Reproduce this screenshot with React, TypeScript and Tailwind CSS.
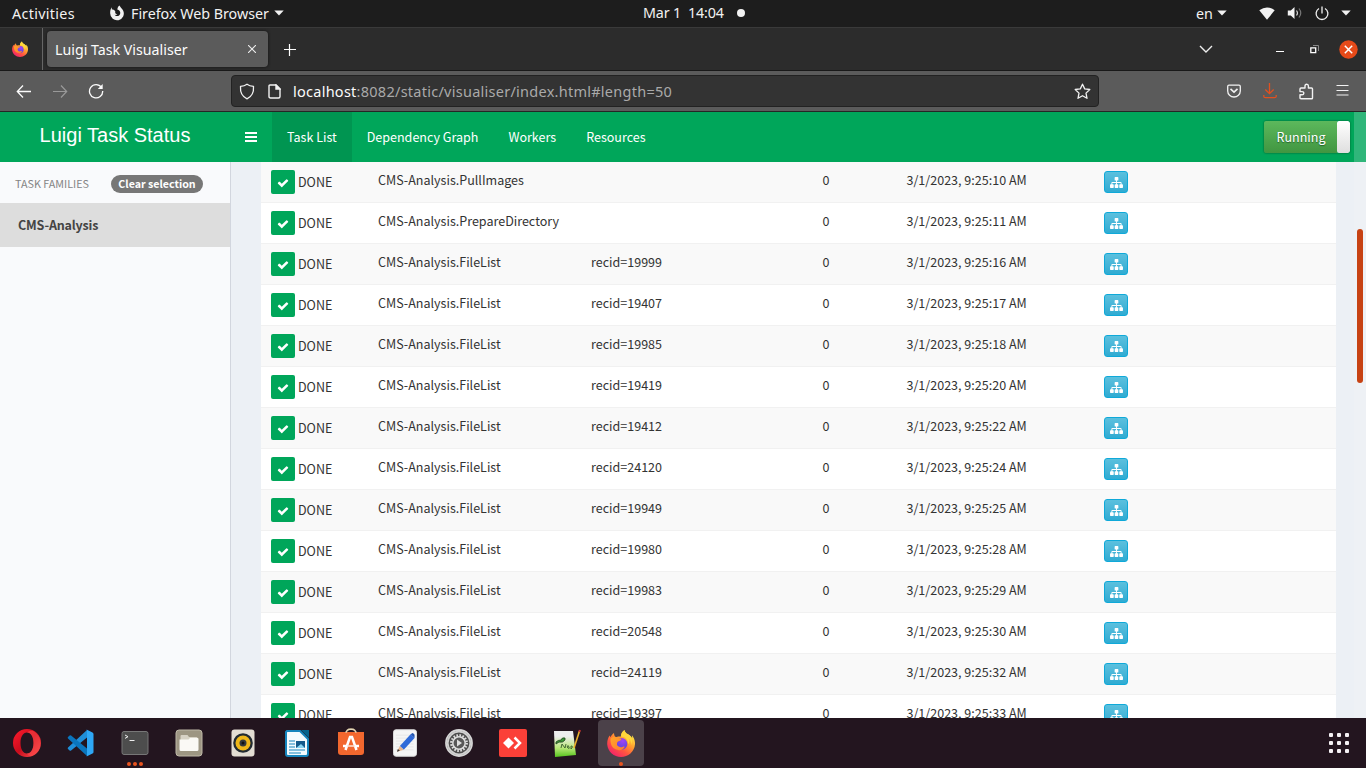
import React from "react";

const rows: [string, string, string][] = [
  ["PullImages", "", "10"],
  ["PrepareDirectory", "", "11"],
  ["FileList", "19999", "16"],
  ["FileList", "19407", "17"],
  ["FileList", "19985", "18"],
  ["FileList", "19419", "20"],
  ["FileList", "19412", "22"],
  ["FileList", "24120", "24"],
  ["FileList", "19949", "25"],
  ["FileList", "19980", "28"],
  ["FileList", "19983", "29"],
  ["FileList", "20548", "30"],
  ["FileList", "24119", "32"],
  ["FileList", "19397", "33"],
];

function Check() {
  return (
    <svg width="12" height="12" viewBox="0 0 1792 1792" fill="#fff">
      <path d="M1671 566q0 40-28 68l-724 724-136 136q-28 28-68 28t-68-28l-136-136-362-362q-28-28-28-68t28-68l136-136q28-28 68-28t68 28l294 295 656-657q28-28 68-28t68 28l136 136q28 28 28 68z" />
    </svg>
  );
}

function Sitemap() {
  return (
    <svg width="13" height="12" viewBox="0 0 1792 1664" fill="#fff">
      <path d="M1792 1248v320q0 40-28 68t-68 28h-320q-40 0-68-28t-28-68v-320q0-40 28-68t68-28h96v-192h-512v192h96q40 0 68 28t28 68v320q0 40-28 68t-68 28h-320q-40 0-68-28t-28-68v-320q0-40 28-68t68-28h96v-192h-512v192h96q40 0 68 28t28 68v320q0 40-28 68t-68 28h-320q-40 0-68-28t-28-68v-320q0-40 28-68t68-28h96v-192q0-52 38-90t90-38h512v-192h-96q-40 0-68-28t-28-68v-320q0-40 28-68t68-28h320q40 0 68 28t28 68v320q0 40-28 68t-68 28h-96v192h512q52 0 90 38t38 90v192h96q40 0 68 28t28 68z" />
    </svg>
  );
}

function Firefox({ size, id }: { size: number; id: string }) {
  return (
    <svg width={size} height={size} viewBox="0 0 32 32">
      <defs>
        <linearGradient id={id + "a"} x1="0.85" y1="0.1" x2="0.2" y2="0.95">
          <stop offset="0" stopColor="#fff04a" />
          <stop offset="0.35" stopColor="#ffa12e" />
          <stop offset="0.65" stopColor="#ff5540" />
          <stop offset="1" stopColor="#f2216b" />
        </linearGradient>
        <radialGradient id={id + "b"} cx="0.6" cy="0.25" r="0.8">
          <stop offset="0" stopColor="#a044f5" />
          <stop offset="1" stopColor="#4f46d8" />
        </radialGradient>
        <linearGradient id={id + "c"} x1="0" y1="0" x2="1" y2="1">
          <stop offset="0" stopColor="#ffa628" />
          <stop offset="1" stopColor="#ff7a30" />
        </linearGradient>
      </defs>
      <path fill={"url(#" + id + "a)"} d="M20 1c-3 2-4 4.500-4.200 7.500C13 8.300 11.500 8.500 10 9.500 8.500 8.500 8 6 8 4.500 5.800 6 4.600 8 3.800 9.500L3 7.500C1 10.500 0 14 .300 18 1 26 8 32 16 32s15.500-6 16-14.500c.200-4-1-7.500-3.500-10.500l.300 3.500C27.800 8.500 26 7 24 6 21.500 4.500 20 3 20 1Z" />
      <circle cx="16.500" cy="17" r="6.800" fill={"url(#" + id + "b)"} />
      <path fill={"url(#" + id + "c)"} d="M4 11c3-3 6-2.500 8.500-.5 2 .200 3 0 4 .700 0 1.800-2 2.300-4 3-1.500 1.500-1.500 4-.2 5.300 1.700 1.500 4 1.600 6 .7 1.500-.5 2.200 0 1.700.7-2 3.500-5.500 4-8 2.800C7.500 23 3.500 19 4 11Z" />
      <path fill="#ffd83b" d="M20 1c-3 2-4 4.500-4 7.500 5 0 8.500 4 8 9 2-2 2-5 1-7 2 2 3 5 2.500 8C31 11 26 7 24 6 21.500 4.500 20 3 20 1Z" />
    </svg>
  );
}

function Caret() {
  return <svg width="10" height="6" viewBox="0 0 10 6" fill="#f2f2f2"><path d="M.3.500h9.400L5 5.500Z" /></svg>;
}

function TopBar() {
  return (
    <div className="flex h-[28px] border-b border-[#3a3a3a] bg-[#1d1d1d] pb-[1px] text-[14.300px] leading-[27px] text-[#f2f2f2]">
      <div className="w-[109px] shrink-0 whitespace-nowrap pl-[12px] tracking-[0.330px]">Activities</div>
      <div className="flex w-[534px] items-center">
        <svg className="mr-[6px]" width="16" height="17" viewBox="0 0 16 17" fill="none">
          <path d="M1.200 8.500a6.800 6.800 0 1 0 12.900-3C13.200 3.800 11.700 3 10.500.500 9 1.500 8.500 3 8.300 4.500 10.800 5 11.800 7 11 9.200c-.8 2-4 2.800-5.400.6 1 .3 2 .1 2.800-.7C6.800 9 5.800 8 6.300 6.300 5.500 5 4 4.300 2.800 4.500V2.300C1.500 4 1 6.200 1.200 8.500Z" fill="#f2f2f2" />
        </svg>
        <span className="whitespace-nowrap tracking-[-0.020px]">Firefox Web Browser</span>
        <span className="ml-[5px]"><Caret /></span>
      </div>
      <div className="flex w-[553px] items-center leading-[26px]">
        <span className="whitespace-pre tracking-[-0.170px]">Mar 1  14:04</span>
        <span className="ml-[13px] size-[8px] rounded-full bg-[#f2f2f2]" />
      </div>
      <div className="flex w-[63px] items-center gap-[4px]"><span>en</span><Caret /></div>
      <div className="flex items-center">
        <svg width="16" height="13" viewBox="0 0 16 13" fill="#f2f2f2"><path d="M.3 3.300Q8-2.500 15.700 3.300L8 12.800Z" /></svg>
        <svg className="ml-[12px]" width="16" height="14" viewBox="0 0 16 14" fill="none">
          <path d="M.8 4.500h3L7.500 1v12L3.800 9.500h-3Z" fill="#f2f2f2" />
          <path d="M9.500 4.500q2 2.500 0 5" stroke="#d0d0d0" strokeWidth="1.200" /><path d="M12 2.500q3.500 4.500 0 9" stroke="#777" strokeWidth="1.200" />
        </svg>
        <svg className="ml-[12px]" width="14" height="15" viewBox="0 0 14 15" fill="none" stroke="#f2f2f2" strokeWidth="1.300">
          <path d="M7 .5v7M4 2.500a5.900 5.900 0 1 0 6 0" />
        </svg>
        <span className="ml-[12px]"><Caret /></span>
      </div>
    </div>
  );
}

function TabBar() {
  return (
    <div className="flex h-[43px] border-b border-[#191919] bg-[#2c2c2c]">
      <div className="flex w-[43px] items-center justify-center border-r border-[#666] pr-[3px]"><Firefox size={16} id="f" /></div>
      <div className="ml-[4px] mt-[3px] flex h-[36px] w-[221px] items-center rounded-[4px] bg-[#5b5b5b] pl-[8px] text-[14.200px] text-[#fbfbfb] shadow-[0_0_3px_#111]">
        <span className="w-[193px] whitespace-nowrap pt-[2px] tracking-[0.010px]">Luigi Task Visualiser</span>
        <svg width="8" height="8" viewBox="0 0 8 8" stroke="#eee" strokeWidth="1.100"><path d="m0 0 8 8M8 0 0 8" /></svg>
      </div>
      <svg className="ml-[16px] mt-[16px]" width="12" height="12" viewBox="0 0 12 12" stroke="#fff" strokeWidth="1.200"><path d="M5.500 0v12M0 5.500h12" /></svg>
      <div className="grow" />
      <svg className="mr-[63px] mt-[17px]" width="14" height="9" viewBox="0 0 14 9" fill="none" stroke="#eee" strokeWidth="1.400"><path d="m1 1 6 6 6-6" /></svg>
      <div className="mr-[26px] mt-[23px] h-px w-[8px] bg-white" />
      <svg className="mr-[20px] mt-[17px]" width="9" height="9" viewBox="0 0 9 9" fill="none"><path d="M3 .5h5.500V6" stroke="#888" /><path d="M.8 2.800h4.900v4.900H.8Z" stroke="#fff" strokeWidth="1.300" /></svg>
      <svg className="mr-[8px] mt-[12px]" width="19" height="19" viewBox="0 0 19 19"><circle cx="9.500" cy="9.500" r="9.200" fill="#e64a19" /><path d="m5.800 5.800 7.400 7.400m0-7.400-7.400 7.400" stroke="#fff" strokeWidth="1.500" /></svg>
    </div>
  );
}

function ToolBar() {
  return (
    <div className="flex h-[41px] items-center border-b border-[#252525] bg-[#5b5b5b]">
      <svg className="ml-[16px]" width="16" height="14" viewBox="0 0 16 14" fill="none" stroke="#fbfbfb" strokeWidth="1.300"><path d="M7 1.500 1.300 7.500 7 13.500M1.300 7.500H15" /></svg>
      <svg className="ml-[21px]" width="15" height="14" viewBox="0 0 15 14" fill="none" stroke="#999" strokeWidth="1.200"><path d="m8 1.500 5.700 6-5.700 6M13.700 7.500H0" /></svg>
      <svg className="ml-[20px]" width="16" height="16" viewBox="0 0 16 16" fill="none" stroke="#fbfbfb" strokeWidth="1.300"><path d="M13.500 4.500A6.600 6.600 0 1 0 14.700 8" /><path d="M14.700 1v5H9.800Z" fill="#fbfbfb" stroke="none" /></svg>
      <div className="ml-[127px] flex h-[32px] w-[868px] items-center rounded-[4px] border border-[#222] bg-[#333]">
        <svg className="ml-[7px]" width="16" height="17" viewBox="0 0 16 17" fill="none" stroke="#f2f2f2" strokeWidth="1.300"><path d="M8 1.200c2 1.500 4 2 6.500 2.200.4 5.600-1.200 10.100-6.500 12.400C2.700 13.500 1.100 9 1.500 3.400 4 3.200 6 2.700 8 1.200Z" strokeLinejoin="round" /></svg>
        <svg className="ml-[13px]" width="13" height="15" viewBox="0 0 13 15" fill="none" stroke="#f2f2f2" strokeWidth="1.400"><path d="M2 1h6l4 4v7.500q0 1.500-1.500 1.500h-8Q1 14 1 12.500V2q0-1 1-1Z" /><path d="M8 1v4h4Z" fill="#f2f2f2" /></svg>
        <span className="ml-[12px] w-[781px] whitespace-nowrap pt-[2px] text-[14.500px] tracking-[0.260px] text-[#aaa]"><span className="text-[#fbfbfb]">localhost</span>:8082/static/visualiser/index.html#length=50</span>
        <svg width="17" height="17" viewBox="0 0 17 17" fill="none" stroke="#f2f2f2" strokeWidth="1.300" strokeLinejoin="round"><path d="m8.500 1.200 2.200 4.700 5.100.6-3.800 3.600 1 5.200-4.500-2.600L4 15.300l1-5.200-3.800-3.600 5.100-.6Z" /></svg>
      </div>
      <svg className="ml-[128px]" width="14" height="14" viewBox="0 0 14 14" fill="none" stroke="#f2f2f2" strokeWidth="1.300"><path d="M2 1.200h10q1.300 0 1.300 1.300V7a6.300 6 0 0 1-12.600 0V2.500Q.7 1.200 2 1.200Z" /><path d="m3.500 4.800 3.500 3.300 3.500-3.300" strokeWidth="1.600" /></svg>
      <svg className="ml-[22px]" width="14" height="16" viewBox="0 0 14 16" fill="none" stroke="#e2501f" strokeWidth="1.300"><path d="M6.500 0v10.500M2.300 6.500l4.200 4.200 4.200-4.200M.8 12v1.200q0 1.500 1.500 1.500h9.400q1.500 0 1.500-1.500V12" /></svg>
      <svg className="ml-[22px]" width="15" height="17" viewBox="0 0 15 17" fill="none" stroke="#f2f2f2" strokeWidth="1.400" strokeLinejoin="round"><path d="M2 5h4V3q0-1.800 1.700-1.800T9.400 3v2h3.100q1 0 1 1v9q0 .8-.8.800H2q-1 0-1-1v-3h2q1.800 0 1.800-1.600T3 8.600H1V6q0-1 1-1Z" /></svg>
      <svg className="mb-[1px] ml-[22px]" width="13" height="11" viewBox="0 0 13 11" stroke="#f2f2f2" strokeWidth="1.200"><path d="M.5.500h12M.5 5.500h12M.5 10h12" /></svg>
    </div>
  );
}

function PageHeader() {
  return (
    <div className="flex h-[50px] bg-[#00a65a] text-[12.540px] leading-[50px] text-white">
      <div className="w-[230px] text-center font-['Liberation_Sans',sans-serif] text-[20px] leading-[46px]">Luigi Task Status</div>
      <div className="flex w-[42px] items-center justify-center"><svg width="12" height="10" viewBox="0 0 12 10" fill="#fff"><path d="M0 0h12v2H0zM0 4h12v2H0zM0 8h12v2H0z" /></svg></div>
      <div className="bg-[#009551] px-[15px]">Task List</div>
      <div className="px-[15px]">Dependency Graph</div>
      <div className="px-[15px]">Workers</div>
      <div className="px-[15px]">Resources</div>
      <div className="grow" />
      <div className="mr-[4px] mt-[9px] flex h-[32px] w-[86px] overflow-hidden rounded-[2px] shadow-[0_0_2px_#004d24]">
        <div className="w-[73px] bg-gradient-to-b from-[#5cb85c] to-[#419641] pl-px text-center leading-[32px] [text-shadow:0_1px_1px_#27652a]">Running</div>
        <div className="w-[13px] rounded-[2px] bg-gradient-to-b from-white to-[#dfdfdf]" />
      </div>
      <div className="w-[12px] bg-[#30b67a]" />
    </div>
  );
}

const tile = "flex h-[50px] w-[54px] items-center justify-center";

function Dock() {
  return (
    <div className="flex h-[50px] items-center bg-[#23151f]">
      <div className={tile}>
        <svg width="28" height="28" viewBox="0 0 28 28"><defs><linearGradient id="op" x1="0" y1="0" x2="1" y2="1"><stop stopColor="#ff1b2d" /><stop offset=".5" stopColor="#c90d1d" /><stop offset="1" stopColor="#ff5252" /></linearGradient></defs>
          <path fillRule="evenodd" fill="url(#op)" d="M14 0a14 14 0 1 0 0 28 14 14 0 0 0 0-28Zm0 3.500c4 0 6.500 4.500 6.500 10.500S18 24.500 14 24.500 7.500 20 7.500 14 10 3.500 14 3.500Z" /><path fill="#ff4b4b" d="M14 24.500c4 0 6.500-4.500 6.500-10.500S18 3.500 14 3.500c2-2 4-2 6-1.700A14 14 0 0 1 19 27c-2 .500-4-.500-5-2.500Z" opacity=".55" /></svg>
      </div>
      <div className={tile}>
        <svg width="28" height="28" viewBox="0 0 28 28"><path d="M20 1 1 18.500q-.7.8 0 1.500l1.600 1.500q.8.600 1.500 0L20 8.500Z" fill="#1f8ed8" /><path d="M20 27 1 9.500q-.7-.8 0-1.500l1.600-1.500q.8-.6 1.500 0L20 19.500Z" fill="#0a75bd" /><path d="m19.500.500 6 3q1 .5 1 1.500v18q0 1-1 1.500l-6 3q.5-.5.500-1.500V2q0-1-.5-1.500Z" fill="#2ea7f5" /></svg>
      </div>
      <div className={tile + " relative"}>
        <svg width="28" height="24" viewBox="0 0 28 24"><rect x="1" y=".5" width="26" height="23" rx="2" fill="#4d4d4d" stroke="#777" /><path d="m4 4 3 1.700-3 1.700M8.500 9.500h5" fill="none" stroke="#eee" /></svg>
        <div className="absolute bottom-[2px] flex gap-[2px]"><i className="size-[4px] rounded-full bg-[#e95420]" /><i className="size-[4px] rounded-full bg-[#e95420]" /><i className="size-[4px] rounded-full bg-[#e95420]" /></div>
      </div>
      <div className={tile}>
        <svg width="28" height="28" viewBox="-.5 -.5 28 28"><rect x=".5" y=".5" width="26" height="26" rx="3" fill="#9d9683" stroke="#beb8a7" /><path d="M5 6.500q0-1 1-1h6l1.500 2H21q1 0 1 1V12H5Z" fill="#d7d2c5" /><path d="M4 10h9l1.500-1.500H22q1 0 1 1V20q0 1.500-1.500 1.500h-16Q4 21.500 4 20Z" fill="#faf9f5" /></svg>
      </div>
      <div className={tile}>
        <svg width="24" height="28" viewBox="0 0 24 28"><rect x=".5" y=".5" width="23" height="27" rx="3" fill="#e3ddd3" /><circle cx="12" cy="14" r="9.800" fill="#222b31" /><circle cx="12" cy="14" r="7.500" fill="#efb719" /><circle cx="12" cy="14" r="3.500" fill="#343a3c" /><circle cx="12" cy="14" r="1.500" fill="#111" /></svg>
      </div>
      <div className={tile}>
        <svg width="24" height="27" viewBox="0 0 24 27"><path d="M2 1h13l8 8v15q0 2-2 2H3q-2 0-2-2V2Z" fill="#f4fbfe" stroke="#1685bd" strokeWidth="2" /><path d="M16 0h8v8Z" fill="#05638c" /><path d="M4 11h6M4 14h6M4 17h6M4 20h16M4 23h12" stroke="#1685bd" strokeWidth="1.200" /><path d="M11 11h9v7h-9Z" fill="#155a8b" /><path d="m11 18 5-4 4 4Z" fill="#8bd6f3" /></svg>
      </div>
      <div className={tile}>
        <svg className="mb-[2px]" width="28" height="28" viewBox="0 0 28 28"><path d="M9 6Q9 1 14 1t5 5" fill="none" stroke="#d8c7a0" strokeWidth="1.500" /><path d="M1 4h26v20q0 3-3 3H4q-3 0-3-3Z" fill="#f2672e" /><path d="M9 5q0-3.500 5-3.500T19 5" fill="none" stroke="#e7dcc0" /><path d="M8.500 22 13 9h2l4.500 13M6 18h5m6 0h5" fill="none" stroke="#fff" strokeWidth="2.500" /><path d="M10 18h8" stroke="#ffe3d5" strokeWidth="1.500" /></svg>
      </div>
      <div className={tile}>
        <svg width="24" height="28" viewBox="0 0 24.500 28"><rect x=".5" y=".5" width="23.500" height="27" rx="2.500" fill="#f5f5f5" stroke="#ddd" /><path d="M3 6h18M3 9h18M3 12h18M3 15h18M3 18h18M3 21h18" stroke="#e0e0e0" strokeWidth=".7" /><path d="m7 17 11-12 4 4-11 12Z" fill="#2f6ad8" /><path d="m18 5 1.500-1q1-.5 2.500 1.500v3.500Z" fill="#2355ae" /><path d="m7 17 4 4-7 2Z" fill="#e6b58e" /><path d="m5 20-1 3 3-1Z" fill="#333" /></svg>
      </div>
      <div className={tile}>
        <svg width="28" height="28" viewBox="0 0 28 28"><circle cx="14" cy="14" r="13" fill="#4d4d4d" stroke="#d5d5d5" strokeWidth="1.800" /><circle cx="14" cy="14" r="11.300" fill="none" stroke="#d0d0d0" strokeWidth="1.800" /><circle cx="14" cy="14" r="7.600" fill="none" stroke="#ddd" strokeWidth="2.600" strokeDasharray="1.600 1.400" /><circle cx="14" cy="14" r="6.200" fill="#585858" stroke="#ddd" strokeWidth="1.500" /><path d="m12 10.500 5 3.500-5 3.500Z" fill="#ddd" /></svg>
      </div>
      <div className={tile}>
        <svg width="28" height="28" viewBox="0 0 28 28"><rect width="28" height="28" rx="2" fill="#fb4038" /><path d="m4 14 5.500-5.500L15 14l-5.500 5.500Z" fill="#fff" /><path d="m15.500 8.500 5.500 5.500-5.500 5.500" fill="none" stroke="#fff" strokeWidth="2.500" /></svg>
      </div>
      <div className={tile}>
        <svg width="28" height="28" viewBox="0 0 28 28"><defs><linearGradient id="npp" x1="0" y1="0" x2="0" y2="1"><stop offset=".2" stopColor="#eee" /><stop offset=".65" stopColor="#b9e878" /><stop offset="1" stopColor="#56c41d" /></linearGradient></defs><path d="M1 2h19l3 24-21 2Z" fill="url(#npp)" /><path d="M3 13q2-2 5-2 1-3 4-2v2q-2 3-6 2l-3 2Z" fill="#3b9a35" stroke="#244020" strokeWidth=".8" /><path d="m8 19 1-4 3 4 1-4m1 3q1-3 2 0t-2 0m4-1v3m0-3q3 0 0 3" fill="none" stroke="#355b2a" strokeWidth=".9" /><path d="M26.500 2 21 19" stroke="#e9af2c" strokeWidth="1.600" /><path d="m26.300 3 .6-2" stroke="#c33" strokeWidth="2" /></svg>
      </div>
      <div className="relative ml-[4px] flex size-[46px] items-center justify-center rounded-[4px] bg-[#4b4149]">
        <Firefox size={28} id="d" />
        <i className="absolute bottom-0 size-[4px] rounded-full bg-[#e95420]" />
      </div>
      <div className="grow" />
      <div className="mr-[17px] grid grid-cols-3 gap-[4px]">
        {[0, 1, 2, 3, 4, 5, 6, 7, 8].map((n) => <i key={n} className="size-[4px] rounded-[1px] bg-[#f5f1f4]" />)}
      </div>
    </div>
  );
}

export default function App() {
  return (
    <div className="flex h-[768px] w-[1366px] flex-col overflow-hidden font-['Noto_Sans',sans-serif]">
      <TopBar />
      <TabBar />
      <ToolBar />
      <div className="flex h-[606px] flex-col overflow-hidden font-['Noto_Sans_CJK_SC',sans-serif] text-[12.540px] text-[#333]">
        <PageHeader />
        <div className="flex h-[556px] bg-[#ecf0f5]">
          <aside className="w-[231px] border-r border-[#d2d6de] bg-[#f9fafc]">
            <div className="flex h-[41px] items-center pl-[15px] pt-[3px]">
              <span className="w-[96px] whitespace-nowrap text-[10.750px] text-[#848484]">TASK FAMILIES</span>
              <span className="flex h-[18px] w-[92px] items-center justify-center whitespace-nowrap rounded-full bg-[#777] text-[10.650px] font-bold text-white">Clear selection</span>
            </div>
            <div className="h-[44px] bg-[#ddd] pl-[18px] text-[12.540px] font-semibold leading-[44px] tracking-[-0.180px] text-[#444]">CMS-Analysis</div>
          </aside>
          <main className="ml-[30px] h-[556px] w-[1075px] overflow-hidden bg-white">
            <div className="mt-[-1px]">
              {rows.map((r, i) => (
                <div key={i} className="flex h-[41px] border-t border-[#f1f1f1] pl-[10px] leading-[20px] odd:bg-[#f9f9f9]">
                  <div className="flex w-[107px] pt-[8px]">
                    <span className="mr-[3px] flex size-[24px] items-center justify-center rounded-[2px] bg-[#00a65a] pt-[2px]"><Check /></span>
                    <span className="leading-[23px]">DONE</span>
                  </div>
                  <div className="w-[213px] pt-[8px]">CMS-Analysis.{r[0]}</div>
                  <div className="w-[231.500px] pt-[8px]">{r[1] && "recid=" + r[1]}</div>
                  <div className="w-[84px] pt-[8px]">0</div>
                  <div className="w-[197.500px] pt-[8px]">3/1/2023, 9:25:{r[2]} AM</div>
                  <span className="mt-[9px] flex h-[22px] w-[24px] items-center justify-center rounded-[3px] border border-[#0fa9d9] bg-gradient-to-b from-[#5bc0de] to-[#2fabd2]"><Sitemap /></span>
                </div>
              ))}
            </div>
          </main>
          <div className="ml-[18px] w-[12px] bg-[#eef1f5] pl-[3px] pt-[67px]"><div className="h-[154px] w-[6px] rounded-full bg-[#c74213]" /></div>
        </div>
      </div>
      <Dock />
    </div>
  );
}
